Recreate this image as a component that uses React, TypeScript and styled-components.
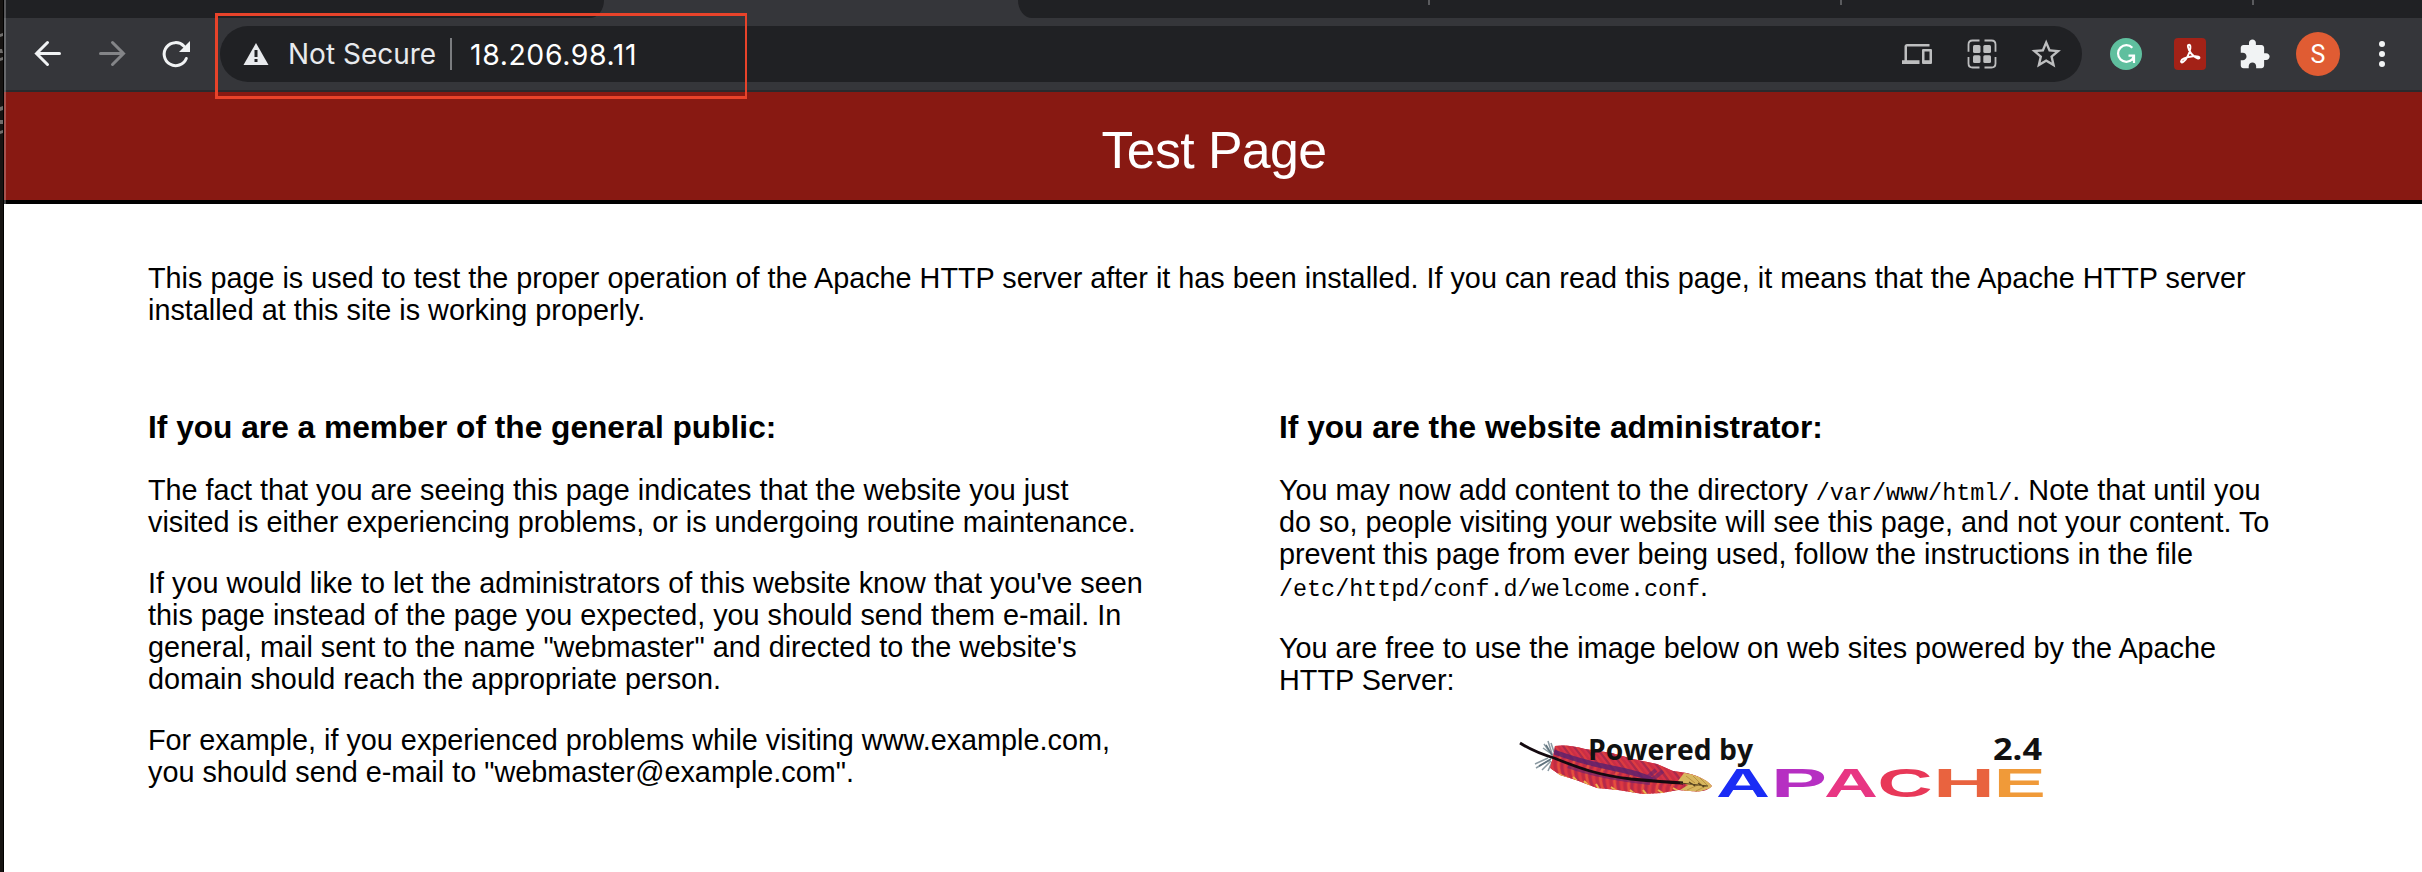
import React from "react";
import styled, { createGlobalStyle } from "styled-components";

const Global = createGlobalStyle`
  html, body { margin: 0; background: #fff; }
  body { font-family: "Liberation Sans", Arial, Helvetica, sans-serif; font-size: 28.8px; line-height: 32px; color: #000; }
  * { box-sizing: border-box; }
`;
const Desktop = styled.div`position: relative; display: flex; width: 2422px; height: 872px; overflow: hidden;`;
const Behind = styled.div`width: 4px; flex: none; background: #171412; box-shadow: inset -1px 0 #000;`;
const Fragments = styled.svg`display: block; width: 3px; height: 140px; fill: #6f6d6b;`;
const Browser = styled.div`flex: 1; min-width: 0; display: flex; flex-direction: column; position: relative;`;
const EdgeLine = styled.div`position: absolute; left: 0; top: 0; width: 2px; height: 204px; background: rgba(255, 255, 255, 0.25);`;

const TabStrip = styled.div`height: 18px; flex: none; display: flex; background: #35363a;`;
const TabsLeft = styled.div`width: 600px; background: #202124; border-bottom-right-radius: 14px 18px;`;
const TabsRight = styled.div`
  margin-left: 414px; flex: 1; display: flex; gap: 410px; padding-left: 410px;
  background: #202124; border-bottom-left-radius: 14px 18px;
`;
const TabSep = styled.i`width: 2px; height: 5px; background: #5a5b5e;`;

const Toolbar = styled.div`height: 74px; flex: none; display: flex; align-items: flex-start; background: #35363a; border-bottom: 2px solid #292a2d;`;
const Nav = styled.div`width: 216px; flex: none; display: flex; padding: 18px 0 0 26px; gap: 28px; color: #f1f3f4;`;
const Icon = styled.svg<{ $dim?: boolean }>`
  width: 36px; height: 36px; flex: none; display: block; fill: none; stroke: currentColor; stroke-width: 3;
  opacity: ${(p) => (p.$dim ? 0.42 : 1)};
`;
const Omnibox = styled.div`width: 1862px; flex: none; height: 56px; margin-top: 8px; border-radius: 28px; background: #202124; display: flex; align-items: center;`;
const Warning = styled.svg`width: 26px; height: 24px; margin-left: 23px; flex: none;`;
const NotSecure = styled.span`margin-left: 19px; width: 150px; white-space: nowrap; font: 28px Inter, sans-serif; color: #e8eaed;`;
const Divider = styled.i`width: 2px; height: 32px; margin-left: 12px; background: #7b7d80;`;
const Address = styled.span`margin-left: 18px; color: #fff; font: 28.4px Inter, sans-serif; letter-spacing: 0.6px; white-space: nowrap;`;
const OmniActions = styled.div`margin-left: auto; display: flex; gap: 28px; padding-right: 18px; color: #bdbebf;`;
const Extensions = styled.div`display: flex; align-items: center; height: 72px; margin-left: 28px;`;
const Extension = styled.svg`width: 32px; height: 32px; margin-right: 32px;`;
const Puzzle = styled.svg`width: 33px; height: 33px; fill: #f1f3f4;`;
const Avatar = styled.div`
  width: 44px; height: 44px; margin-left: 25px; border-radius: 50%; background: #e05c33; color: #fff;
  display: grid; place-items: center; font: 25px/1 Roboto, sans-serif;
`;
const Menu = styled.svg`width: 8px; height: 28px; margin-left: 38px; fill: #f1f3f4;`;
const Highlight = styled.div`position: absolute; left: 215px; top: 13px; width: 532px; height: 86px; border: 3px solid #e8432a; border-right-width: 2.500px;`;

const Banner = styled.header`height: 112px; flex: none; background: #881912; border-bottom: 4px solid #000; color: #fff; text-align: center;`;
const Title = styled.h1`margin: 0; padding: 29px 0 0 2px; font-size: 51.84px; line-height: 58px; font-weight: 400; letter-spacing: -0.6px;`;
const Page = styled.main`padding: 58px 144px 0;`;
const Para = styled.p`margin: 0 0 29px; white-space: nowrap;`;
const Intro = styled(Para)`margin-bottom: 83px;`;
const Columns = styled.div`display: flex;`;
const Column = styled.section`width: 1131px; flex: none;`;
const Heading = styled.h2`margin: 0 0 29px; font-size: 31.68px; line-height: 36px; font-weight: 700; white-space: nowrap;`;
const Path = styled.code`font: 23.4px/1 "Liberation Mono", monospace;`;
const Logo = styled.svg`display: block; width: 522px; height: 60px; margin: 41px 0 0 241px; overflow: visible;`;

const letters: [string, string, number, number][] = [
  ["A", "#1a2cf5", 196, 54],
  ["P", "#b62fc2", 251, 56],
  ["A", "#e83683", 304, 54],
  ["C", "#e83858", 357.5, 55],
  ["H", "#e9633f", 413, 62],
  ["E", "#f09a39", 473.7, 52],
];

const upperColors = ["#d5324a", "#a92a4c", "#dc3c40", "#c92f45"];
const lowerColors = ["#dc3a42", "#c02d43", "#e4503f", "#b42b4c"];
const barbs = Array.from({ length: 44 }, (_, i) => i);
const quillY = (x: number) => 16 + (x - 30) * 0.36 - Math.pow((x - 30) / 130, 2) * 14;

function Feather() {
  return (
    <g fill="none">
      <clipPath id="vane">
        <path d="M35 9Q48 7 65 12L92 16L113 22L137 27L153 34Q182 37 192 49Q187 56 170 54L158 53L142 56L123 57L98 53L77 51L56 43L40 38L30 31L33 20Z" />
      </clipPath>
      <g stroke="#8b9aa2" strokeWidth="1.500">
        <path d="M33 20L28 4M32 18L24 7M30 16L23 11M34 15L31 6M28 21L15 27M30 23L16 31M31 24L22 33M32 25L28 34" />
        <path stroke="#5f727d" d="M32 18L26 8M31 22L19 29" />
      </g>
      <g clipPath="url(#vane)">
        <path fill="#cf3045" d="M25 0H195V60H25Z" />
        {barbs.map((i) => {
          const x = 28 + i * 3.5;
          const y = quillY(x);
          return (
            <g key={i}>
              <path stroke={upperColors[i % 4]} strokeWidth="2.400" d={`M${x + 8} ${y + 2}Q${x + 1} ${y - 9} ${x - 10} ${y - 22}`} />
              <path stroke={lowerColors[i % 4]} strokeWidth="2.400" d={`M${x + 6} ${y}Q${x} ${y + 11} ${x + 8} ${y + 25}`} />
            </g>
          );
        })}
        <path stroke="#55206f" strokeWidth="5" opacity=".8" d="M34 15Q62 25 92 31T132 43" />
        <path stroke="#6b246c" strokeWidth="4" opacity=".65" d="M48 29Q78 40 130 46M124 43L136 33M132 43L143 34" />
        <path stroke="#e9b650" strokeWidth="2" d="M38 37L49 42M53 40L57 44M64 44L69 49M76 47L79 52M91 50L98 55M110 53L116 58M123 53L127 58M138 53L144 57M153 51L160 55" />
        <path fill="#d7b65e" d="M164 36L158 44L168 48L160 53L175 56L194 50L184 38Z" />
        <path stroke="#b99142" d="M166 39L175 46M173 39L181 47M180 41L187 48M167 53L178 48M176 54L186 49" />
      </g>
      <path stroke="#14090f" strokeWidth="2.800" d="M0 6Q14 15 34 21C59 31 77 38 111 42Q143 45 163 46" />
      <path stroke="#56421f" strokeWidth="1.200" d="M160 46L188 49M169 45L175 49M178 46L184 50" />
    </g>
  );
}

export default function App() {
  return (
    <Desktop>
      <Global />
      <Behind>
        <Fragments viewBox="0 0 3 140">
          <path d="M0 34L3 33V36L0 37ZM0 49H2L3 53H0ZM0 58L3 57V60L0 61ZM0 107L3 106V110L0 111ZM0 120H3V124H0ZM0 131L3 130V133L0 134Z" />
        </Fragments>
      </Behind>
      <Browser>
        <TabStrip>
          <TabsLeft />
          <TabsRight><TabSep /><TabSep /><TabSep /></TabsRight>
        </TabStrip>
        <Toolbar>
          <Nav>
            <Icon viewBox="0 0 36 36" strokeLinecap="round"><path d="M29.500 17.500H6.500M17.500 6.500L6.500 17.500L17.500 28.500" /></Icon>
            <Icon $dim viewBox="0 0 36 36" strokeLinecap="round"><path d="M6.500 17.500H29.500M18.500 6.500L29.500 17.500L18.500 28.500" /></Icon>
            <Icon viewBox="0 0 36 36">
              <path strokeLinecap="round" d="M28.300 22.500A11.500 11.500 0 1 1 26 10.200" />
              <path d="M32 5V16H21Z" fill="currentColor" stroke="none" />
            </Icon>
          </Nav>
          <Omnibox>
            <Warning viewBox="0 0 26 24">
              <path d="M13 1L25.500 23H.5Z" fill="#e8eaed" />
              <path d="M13 8V15M13 17V20" stroke="#202124" strokeWidth="3" />
            </Warning>
            <NotSecure>Not Secure</NotSecure>
            <Divider />
            <Address>18.206.98.11</Address>
            <OmniActions>
              <Icon viewBox="0 0 36 36">
                <path transform="translate(2 3) scale(1.250)" fill="currentColor" stroke="none" d="M4 6h18V4H4c-1.100 0-2 .9-2 2v11H0v3h14v-3H4V6zm19 2h-6c-.55 0-1 .45-1 1v10c0 .55.45 1 1 1h6c.55 0 1-.45 1-1V9c0-.55-.45-1-1-1zm-1 9h-4v-7h4v7z" />
              </Icon>
              <Icon viewBox="0 0 36 36">
                <path strokeWidth="1.800" d="M4.500 15.700V8.500Q4.500 4.500 8.500 4.500H15.500M20.500 4.500H27.500Q31.500 4.500 31.500 8.500V15.700M31.500 21V27.500Q31.500 31.500 27.500 31.500H20.500M15.500 31.500H8.500Q4.500 31.500 4.500 27.500V21" />
                <g fill="currentColor" stroke="none">
                  <rect x="9" y="9" width="7.500" height="8" rx="1.500" />
                  <rect x="19.300" y="9" width="7.700" height="8" rx="1.500" />
                  <rect x="9" y="19.300" width="7.500" height="7.700" rx="1.500" />
                  <rect x="19.300" y="19.300" width="7.700" height="7.700" rx="1.500" />
                </g>
              </Icon>
              <Icon viewBox="0 0 36 36">
                <path transform="translate(.5 .5) scale(1.475)" fill="currentColor" stroke="none" d="M22 9.240l-7.190-.62L12 2 9.190 8.630 2 9.240l5.460 4.730L5.820 21 12 17.270 18.180 21l-1.630-7.030L22 9.240zM12 15.400l-3.760 2.270 1-4.280-3.320-2.880 4.380-.38L12 6.100l1.710 4.040 4.380.38-3.320 2.880 1 4.280L12 15.400z" />
              </Icon>
            </OmniActions>
          </Omnibox>
          <Extensions>
            <Extension viewBox="0 0 32 32" fill="none">
              <circle cx="16" cy="16" r="16" fill="#5fbf9e" />
              <path d="M22.300 9.700A8.300 8.300 0 1 0 22.300 21.300M18.500 17.700H24V25" stroke="#fff" strokeWidth="2.200" />
              <path d="M25 17V25L22.500 22.500L20 24L23 17Z" fill="#fff" />
            </Extension>
            <Extension viewBox="0 0 32 32" fill="none">
              <rect width="32" height="32" rx="4" fill="#a32217" />
              <path d="M7 23.500C7.500 21 13 19 19 18.300C24 17.700 26 19 25.300 20.200C24 22 17.500 17.500 15 12C13.300 8 13.600 6.800 15.200 6.800C17.300 7 16.600 12.500 13.800 18C11 23.700 7.200 26 7 23.500Z" stroke="#fff" strokeWidth="1.900" />
            </Extension>
            <Puzzle viewBox="0 0 24 24">
              <path d="M20.500 11H19V7c0-1.100-.9-2-2-2h-4V3.500C13 2.120 11.880 1 10.500 1S8 2.120 8 3.500V5H4c-1.100 0-1.990.9-1.990 2v3.800H3.500c1.490 0 2.700 1.210 2.700 2.700s-1.210 2.700-2.700 2.700H2V20c0 1.100.9 2 2 2h3.800v-1.500c0-1.490 1.210-2.700 2.700-2.700 1.490 0 2.700 1.210 2.700 2.700V22H17c1.100 0 2-.9 2-2v-4h1.500c1.380 0 2.500-1.120 2.500-2.500S21.880 11 20.500 11z" />
            </Puzzle>
            <Avatar>S</Avatar>
            <Menu viewBox="0 0 8 28">
              <circle cx="4" cy="4" r="3" /><circle cx="4" cy="14" r="3" /><circle cx="4" cy="24" r="3" />
            </Menu>
          </Extensions>
        </Toolbar>
        <Banner><Title>Test Page</Title></Banner>
        <Page>
          <Intro>This page is used to test the proper operation of the Apache HTTP server after it has been installed. If you can read this page, it means that the Apache HTTP server<br />installed at this site is working properly.</Intro>
          <Columns>
            <Column>
              <Heading>If you are a member of the general public:</Heading>
              <Para>The fact that you are seeing this page indicates that the website you just<br />visited is either experiencing problems, or is undergoing routine maintenance.</Para>
              <Para>If you would like to let the administrators of this website know that you've seen<br />this page instead of the page you expected, you should send them e-mail. In<br />general, mail sent to the name "webmaster" and directed to the website's<br />domain should reach the appropriate person.</Para>
              <Para>For example, if you experienced problems while visiting www.example.com,<br />you should send e-mail to "webmaster@example.com".</Para>
            </Column>
            <Column>
              <Heading>If you are the website administrator:</Heading>
              <Para>You may now add content to the directory <Path>/var/www/html/</Path>. Note that until you<br />do so, people visiting your website will see this page, and not your content. To<br />prevent this page from ever being used, follow the instructions in the file<br /><Path>/etc/httpd/conf.d/welcome.conf</Path>.</Para>
              <Para>You are free to use the image below on web sites powered by the Apache<br />HTTP Server:</Para>
              <Logo viewBox="0 0 522 60">
                <Feather />
                <g fontFamily="Open Sans, sans-serif" fontWeight="700" fill="#111">
                  <text x="68" y="22.500" fontSize="29" textLength="165" lengthAdjust="spacingAndGlyphs">Powered by</text>
                  <text x="473" y="23" fontSize="31" textLength="49" lengthAdjust="spacingAndGlyphs">2.4</text>
                </g>
                <g fontFamily="Liberation Sans, sans-serif" fontWeight="700" fontSize="40.500">
                  {letters.map(([char, color, x, w], i) => (
                    <text key={i} x={x} y="59.700" fill={color} textLength={w} lengthAdjust="spacingAndGlyphs">{char}</text>
                  ))}
                </g>
              </Logo>
            </Column>
          </Columns>
        </Page>
        <EdgeLine />
      </Browser>
      <Highlight />
    </Desktop>
  );
}
